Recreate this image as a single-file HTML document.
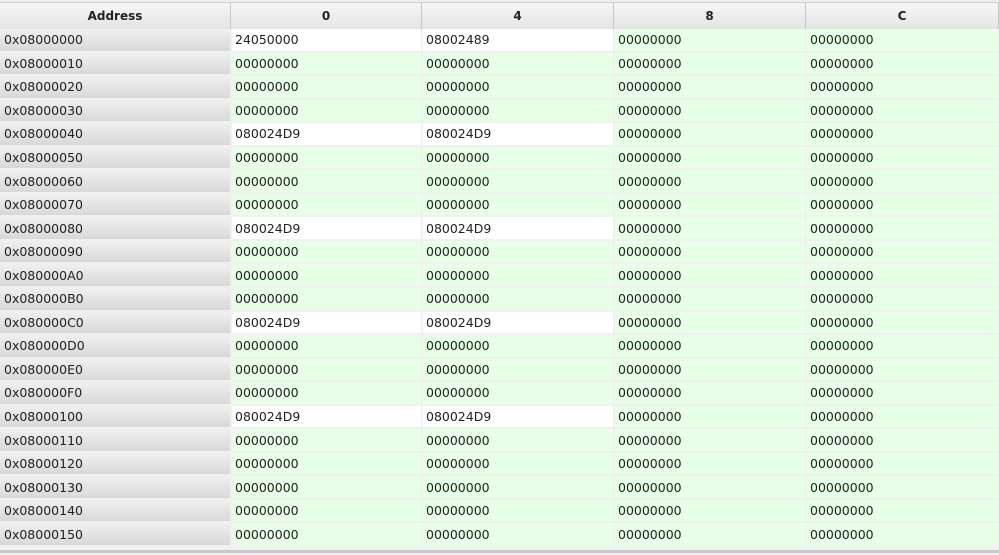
<!DOCTYPE html>
<html><head><meta charset="utf-8"><style>
body{margin:0;width:999px;height:555px;background:#f0f0f0;overflow:hidden;font-family:"DejaVu Sans","Liberation Sans",sans-serif;font-size:12.5px;color:#222}
.h{position:absolute;top:2px;height:27px;background:linear-gradient(#f7f7f7,#e4e4e4);border-top:1px solid #ccc;border-right:1px solid #c8c8c8;text-align:center;line-height:27px;font-weight:bold;font-size:12px;color:#222;box-sizing:border-box}
table{position:absolute;top:29px;left:0;border-collapse:collapse;table-layout:fixed;width:999px}
td{height:21.55px;padding:0 0 0 3px;border:2px solid #f0f0f0;border-top:0;border-left:0;background:#e6ffe6;white-space:nowrap;overflow:hidden;line-height:21px}
td.a{background:linear-gradient(#f0f0f0,#d8d8d8);padding-left:4px}
td.w{background:#fff}
.bot{position:absolute;top:550px;left:0;width:999px;height:3px;background:#c8c8c8}
</style></head><body>
<div class="h" style="left:0;width:231px">Address</div>
<div class="h" style="left:231px;width:191px">0</div>
<div class="h" style="left:422px;width:192px">4</div>
<div class="h" style="left:614px;width:192px">8</div>
<div class="h" style="left:806px;width:193px">C</div>
<table>
<colgroup><col style="width:231px"><col style="width:191px"><col style="width:192px"><col style="width:192px"><col style="width:193px"></colgroup>
<tr><td class="a">0x08000000</td><td class="w">24050000</td><td class="w">08002489</td><td>00000000</td><td>00000000</td></tr>
<tr><td class="a">0x08000010</td><td>00000000</td><td>00000000</td><td>00000000</td><td>00000000</td></tr>
<tr><td class="a">0x08000020</td><td>00000000</td><td>00000000</td><td>00000000</td><td>00000000</td></tr>
<tr><td class="a">0x08000030</td><td>00000000</td><td>00000000</td><td>00000000</td><td>00000000</td></tr>
<tr><td class="a">0x08000040</td><td class="w">080024D9</td><td class="w">080024D9</td><td>00000000</td><td>00000000</td></tr>
<tr><td class="a">0x08000050</td><td>00000000</td><td>00000000</td><td>00000000</td><td>00000000</td></tr>
<tr><td class="a">0x08000060</td><td>00000000</td><td>00000000</td><td>00000000</td><td>00000000</td></tr>
<tr><td class="a">0x08000070</td><td>00000000</td><td>00000000</td><td>00000000</td><td>00000000</td></tr>
<tr><td class="a">0x08000080</td><td class="w">080024D9</td><td class="w">080024D9</td><td>00000000</td><td>00000000</td></tr>
<tr><td class="a">0x08000090</td><td>00000000</td><td>00000000</td><td>00000000</td><td>00000000</td></tr>
<tr><td class="a">0x080000A0</td><td>00000000</td><td>00000000</td><td>00000000</td><td>00000000</td></tr>
<tr><td class="a">0x080000B0</td><td>00000000</td><td>00000000</td><td>00000000</td><td>00000000</td></tr>
<tr><td class="a">0x080000C0</td><td class="w">080024D9</td><td class="w">080024D9</td><td>00000000</td><td>00000000</td></tr>
<tr><td class="a">0x080000D0</td><td>00000000</td><td>00000000</td><td>00000000</td><td>00000000</td></tr>
<tr><td class="a">0x080000E0</td><td>00000000</td><td>00000000</td><td>00000000</td><td>00000000</td></tr>
<tr><td class="a">0x080000F0</td><td>00000000</td><td>00000000</td><td>00000000</td><td>00000000</td></tr>
<tr><td class="a">0x08000100</td><td class="w">080024D9</td><td class="w">080024D9</td><td>00000000</td><td>00000000</td></tr>
<tr><td class="a">0x08000110</td><td>00000000</td><td>00000000</td><td>00000000</td><td>00000000</td></tr>
<tr><td class="a">0x08000120</td><td>00000000</td><td>00000000</td><td>00000000</td><td>00000000</td></tr>
<tr><td class="a">0x08000130</td><td>00000000</td><td>00000000</td><td>00000000</td><td>00000000</td></tr>
<tr><td class="a">0x08000140</td><td>00000000</td><td>00000000</td><td>00000000</td><td>00000000</td></tr>
<tr><td class="a">0x08000150</td><td>00000000</td><td>00000000</td><td>00000000</td><td>00000000</td></tr>
</table>
<div class="bot"></div>
</body></html>
